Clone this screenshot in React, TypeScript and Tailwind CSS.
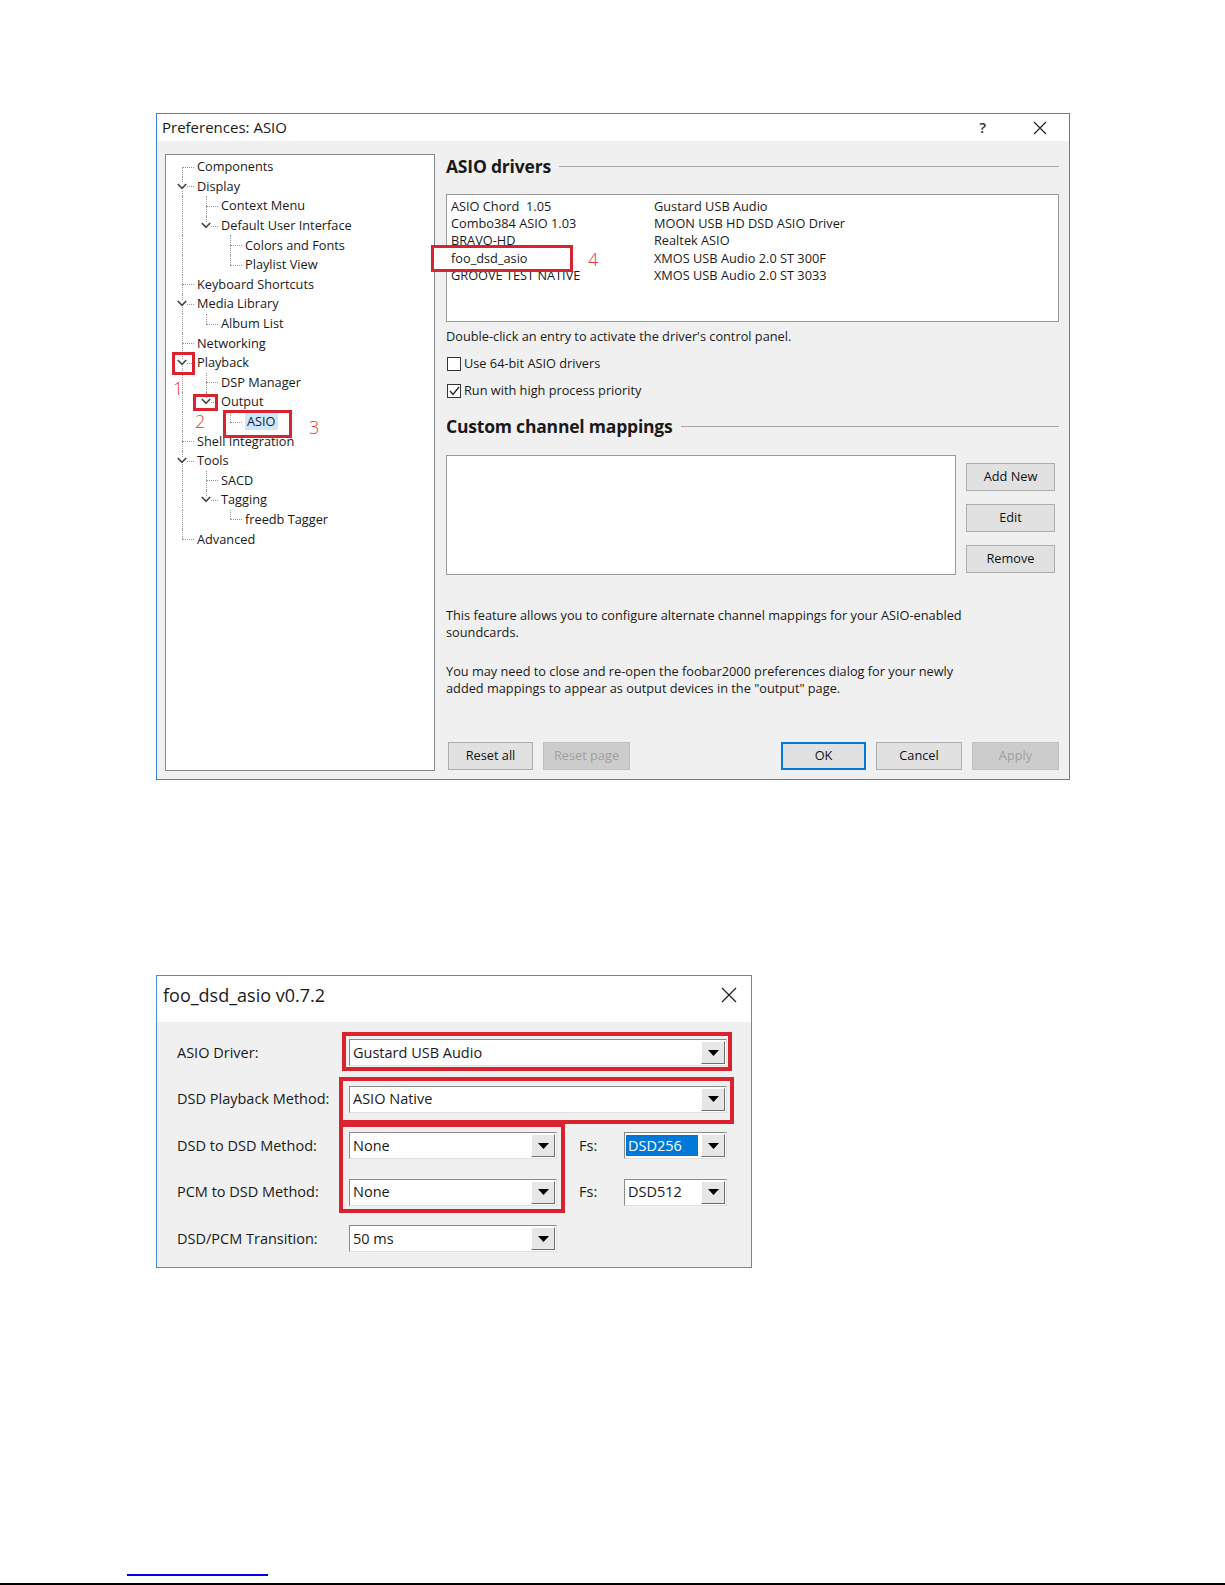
import React from 'react';

type Node = { label: string; d: number; open?: boolean; selected?: boolean };

const tree: Node[] = [
  { label: 'Components', d: 0 },
  { label: 'Display', d: 0, open: true },
  { label: 'Context Menu', d: 1 },
  { label: 'Default User Interface', d: 1, open: true },
  { label: 'Colors and Fonts', d: 2 },
  { label: 'Playlist View', d: 2 },
  { label: 'Keyboard Shortcuts', d: 0 },
  { label: 'Media Library', d: 0, open: true },
  { label: 'Album List', d: 1 },
  { label: 'Networking', d: 0 },
  { label: 'Playback', d: 0, open: true },
  { label: 'DSP Manager', d: 1 },
  { label: 'Output', d: 1, open: true },
  { label: 'ASIO', d: 2, selected: true },
  { label: 'Shell Integration', d: 0 },
  { label: 'Tools', d: 0, open: true },
  { label: 'SACD', d: 1 },
  { label: 'Tagging', d: 1, open: true },
  { label: 'freedb Tagger', d: 2 },
  { label: 'Advanced', d: 0 },
];

const isLast = (i: number) => {
  const d = tree[i].d;
  for (let j = i + 1; j < tree.length; j++) {
    if (tree[j].d < d) return true;
    if (tree[j].d === d) return false;
  }
  return true;
};

const ancestorContinues = (i: number, level: number) => {
  for (let k = i - 1; k >= 0; k--) {
    if (tree[k].d === level) return !isLast(k);
  }
  return false;
};

const Chevron = () => (
  <svg width="10" height="7" viewBox="0 0 10 7" className="relative z-10 bg-white">
    <path d="M0.8 1 L5 5.4 L9.2 1" fill="none" stroke="#444" strokeWidth="1.6" />
  </svg>
);

const TreeRow = ({ node, i }: { node: Node; i: number }) => {
  const cells = [];
  for (let level = 0; level < node.d; level++) {
    cells.push(
      <div key={level} className="relative h-full w-[24px] shrink-0">
        {ancestorContinues(i, level) && (
          <div className="absolute top-0 bottom-0 left-[12px] border-l border-dotted border-[#9a9a9a]" />
        )}
      </div>
    );
  }
  const first = i === 0;
  const last = isLast(i);
  cells.push(
    <div key="own" className="relative flex h-full w-[24px] shrink-0 items-center">
      {!first && <div className="absolute top-0 h-1/2 left-[12px] border-l border-dotted border-[#9a9a9a]" />}
      {!last && <div className="absolute top-1/2 bottom-0 left-[12px] border-l border-dotted border-[#9a9a9a]" />}
      <div className="absolute top-1/2 left-[12px] right-0 border-t border-dotted border-[#9a9a9a]" />
      {node.open && (
        <div className="absolute left-[7px] top-[6px] flex">
          <Chevron />
        </div>
      )}
    </div>
  );
  return (
    <div className="flex h-[19.6px] items-stretch">
      {cells}
      <div className="flex items-center pl-[3px]">
        <span className={node.selected ? 'bg-[#cce8ff] px-[2px] leading-[17px]' : 'leading-[17px]'}>{node.label}</span>
      </div>
    </div>
  );
};

const Btn = ({ label, w, kind }: { label: string; w: string; kind?: 'default' | 'disabled' }) => {
  const base = 'flex h-[28px] items-center justify-center text-[12.75px] ' + w;
  if (kind === 'disabled')
    return <div className={base + ' border border-[#bfbfbf] bg-[#cccccc] text-[#a0a0a0]'}>{label}</div>;
  if (kind === 'default')
    return <div className={base + ' border-2 border-[#0078d7] bg-[#e1e1e1] text-[#111]'}>{label}</div>;
  return <div className={base + ' border border-[#adadad] bg-[#e1e1e1] text-[#111]'}>{label}</div>;
};

const Check = ({ checked, label }: { checked?: boolean; label: string }) => (
  <div className="flex h-[16px] items-center gap-[3px]">
    <div className="flex h-[14px] w-[14px] items-center justify-center border border-[#333] bg-white">
      {checked && (
        <svg width="11" height="10" viewBox="0 0 11 10">
          <path d="M1 5 L4 8.5 L10 1" fill="none" stroke="#222" strokeWidth="1.3" />
        </svg>
      )}
    </div>
    <span>{label}</span>
  </div>
);

const Heading = ({ text }: { text: string }) => (
  <div className="flex h-[24px] items-center gap-[8px]">
    <span className="text-[17.5px] font-bold tracking-[-0.2px] text-[#1a1a1a]">{text}</span>
    <div className="h-px flex-1 bg-[#a8a8a8]" />
  </div>
);

const RedNum = ({ n, cls }: { n: string; cls: string }) => (
  <span className={'absolute text-[18px] leading-none font-light text-[#e23a3a] ' + cls}>{n}</span>
);

const Combo = ({ value, w, selected }: { value: string; w: string; selected?: boolean }) => (
  <div className={'flex h-[27px] items-stretch border border-t-[#8a8a8a] border-l-[#8a8a8a] border-r-[#e0e0e0] border-b-[#e0e0e0] bg-white ' + w}>
    <div className="flex flex-1 items-stretch py-[2px] pl-[1px] pr-[2px]">
      {selected ? (
        <span className="flex flex-1 items-center bg-[#0078d7] pl-[2px] text-white">{value}</span>
      ) : (
        <span className="flex items-center pl-[2px]">{value}</span>
      )}
    </div>
    <div className="m-[1px] flex w-[24px] items-center justify-center border border-t-white border-l-white border-r-[#6e6e6e] border-b-[#6e6e6e] bg-[#e6e6e6]">
      <svg width="11" height="6" viewBox="0 0 11 6">
        <path d="M0 0 H11 L5.5 6 Z" fill="#000" />
      </svg>
    </div>
  </div>
);

const drivers1 = ['ASIO Chord  1.05', 'Combo384 ASIO 1.03', 'BRAVO-HD', 'foo_dsd_asio', 'GROOVE TEST NATIVE'];
const drivers2 = ['Gustard USB Audio', 'MOON USB HD DSD ASIO Driver', 'Realtek ASIO', 'XMOS USB Audio 2.0 ST 300F', 'XMOS USB Audio 2.0 ST 3033'];

export default function App() {
  return (
    <div className="min-h-[1585px] bg-white font-['Open_Sans',sans-serif] text-[#1a1a1a]">
      <div className="flex flex-col pt-[113px] pl-[156px]">
        {/* Preferences dialog */}
        <div className="flex h-[667px] w-[914px] flex-col border border-[#3d86d6] bg-[#f0f0f0]">
          <div className="flex h-[28px] items-center bg-white pl-[5px] text-[15px]">
            <span>Preferences: ASIO</span>
            <span className="ml-auto mr-[47px] text-[15px] font-semibold text-[#333]">?</span>
            <svg width="14" height="14" viewBox="0 0 14 14" className="mr-[22px]">
              <path d="M1 1 L13 13 M13 1 L1 13" stroke="#222" strokeWidth="1.2" />
            </svg>
          </div>
          <div className="flex flex-1 pt-[13px] pl-[8px] pb-[8px] text-[12.75px]">
            {/* tree */}
            <div className="relative h-[617px] w-[270px] border border-[#828790] bg-white pt-[2px] pl-[4px]">
              {tree.map((n, i) => (
                <TreeRow key={n.label} node={n} i={i} />
              ))}
              <div className="absolute left-[6px] top-[197px] h-[23px] w-[23px] border-[3px] border-[#d9232e]" />
              <RedNum n="1" cls="left-[7px] top-[224px]" />
              <div className="absolute left-[27px] top-[239px] h-[17px] w-[25px] border-[3px] border-[#d9232e]" />
              <RedNum n="2" cls="left-[29px] top-[257px]" />
              <div className="absolute left-[57px] top-[255px] h-[28px] w-[69px] border-[3px] border-[#d9232e]" />
              <RedNum n="3" cls="left-[143px] top-[263px]" />
            </div>
            {/* right column */}
            <div className="ml-[11px] flex w-[613px] flex-col">
              <Heading text="ASIO drivers" />
              <div className="mt-[16px] flex h-[128px] border border-[#9a9a9a] bg-white pt-[3px] pl-[4px]">
                <div className="flex w-[203px] flex-col">
                  {drivers1.map((d, i) =>
                    i === 3 ? (
                      <div key={d} className="relative h-[17.2px] leading-[17.2px]">
                        <div className="absolute -left-[20px] -top-[5px] z-10 h-[27px] w-[142px] border-[3px] border-[#d9232e] bg-white" />
                        <span className="relative z-20">{d}</span>
                        <RedNum n="4" cls="left-[137px] top-[0px]" />
                      </div>
                    ) : (
                      <div key={d} className="h-[17.2px] whitespace-pre leading-[17.2px]">
                        {d}
                      </div>
                    )
                  )}
                </div>
                <div className="flex flex-col">
                  {drivers2.map((d) => (
                    <div key={d} className="h-[17.2px] leading-[17.2px]">
                      {d}
                    </div>
                  ))}
                </div>
              </div>
              <div className="mt-[6px] h-[16px] leading-[16px]">Double-click an entry to activate the driver's control panel.</div>
              <div className="mt-[12px] pl-[1px]">
                <Check label="Use 64-bit ASIO drivers" />
              </div>
              <div className="mt-[11px] pl-[1px]">
                <Check checked label="Run with high process priority" />
              </div>
              <div className="mt-[15px]">
                <Heading text="Custom channel mappings" />
              </div>
              <div className="mt-[17px] flex gap-[10px]">
                <div className="h-[120px] w-[510px] border border-[#9a9a9a] bg-white" />
                <div className="flex flex-col gap-[13px] pt-[8px]">
                  <Btn label="Add New" w="w-[89px]" />
                  <Btn label="Edit" w="w-[89px]" />
                  <Btn label="Remove" w="w-[89px]" />
                </div>
              </div>
              <p className="mt-[32px] w-[530px] leading-[16.5px]">
                This feature allows you to configure alternate channel mappings for your ASIO-enabled soundcards.
              </p>
              <p className="mt-[23px] w-[520px] leading-[16.5px]">
                You may need to close and re-open the foobar2000 preferences dialog for your newly added mappings to appear as output devices in the "output" page.
              </p>
              <div className="mt-auto mb-[1px] flex items-center pl-[2px]">
                <Btn label="Reset all" w="w-[85px]" />
                <div className="ml-[10px]">
                  <Btn label="Reset page" w="w-[87px]" kind="disabled" />
                </div>
                <div className="ml-auto flex gap-[10px]">
                  <Btn label="OK" w="w-[85px]" kind="default" />
                  <Btn label="Cancel" w="w-[86px]" />
                  <Btn label="Apply" w="w-[87px]" kind="disabled" />
                </div>
              </div>
            </div>
          </div>
        </div>

        {/* foo_dsd_asio dialog */}
        <div className="mt-[195px] flex h-[293px] w-[596px] flex-col border border-[#4a90d9] bg-[#f0f0f0]">
          <div className="flex h-[46px] items-center bg-white pb-[8px] pl-[6px] text-[18px]">
            <span>foo_dsd_asio v0.7.2</span>
            <svg width="16" height="16" viewBox="0 0 16 16" className="ml-auto mr-[14px]">
              <path d="M1 1 L15 15 M15 1 L1 15" stroke="#222" strokeWidth="1.3" />
            </svg>
          </div>
          <div className="relative flex flex-1 flex-col gap-[19.5px] pt-[17px] pl-[20px] text-[14.5px]">
            <div className="flex items-center">
              <span className="w-[172px]">ASIO Driver:</span>
              <Combo value="Gustard USB Audio" w="w-[378px]" />
            </div>
            <div className="flex items-center">
              <span className="w-[172px]">DSD Playback Method:</span>
              <Combo value="ASIO Native" w="w-[378px]" />
            </div>
            <div className="flex items-center">
              <span className="w-[172px]">DSD to DSD Method:</span>
              <Combo value="None" w="w-[208px]" />
              <span className="ml-[22px] w-[45px]">Fs:</span>
              <Combo value="DSD256" w="w-[103px]" selected />
            </div>
            <div className="flex items-center">
              <span className="w-[172px]">PCM to DSD Method:</span>
              <Combo value="None" w="w-[208px]" />
              <span className="ml-[22px] w-[45px]">Fs:</span>
              <Combo value="DSD512" w="w-[103px]" />
            </div>
            <div className="flex items-center">
              <span className="w-[172px]">DSD/PCM Transition:</span>
              <Combo value="50 ms" w="w-[208px]" />
            </div>
            <div className="absolute left-[185px] top-[10px] h-[39px] w-[390px] border-[4px] border-[#d9232e]" />
            <div className="absolute left-[182px] top-[55px] h-[47px] w-[395px] border-[4px] border-[#d9232e]" />
            <div className="absolute left-[182px] top-[101px] h-[90px] w-[226px] border-[4px] border-[#d9232e]" />
          </div>
        </div>
      </div>

      <div className="mt-[306px] ml-[127px] h-[2px] w-[141px] bg-[#0000ee]" />
      <div className="mt-[7px] h-[2px] w-full bg-black" />
    </div>
  );
}
